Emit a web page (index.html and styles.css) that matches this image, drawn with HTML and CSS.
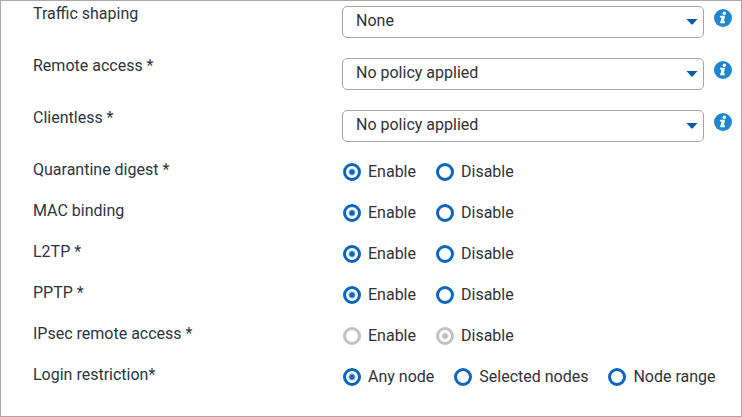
FILE: index.html
```html
<!DOCTYPE html>
<html lang="en">
<head>
<meta charset="utf-8">
<title>User policies</title>
<link rel="stylesheet" href="styles.css">
</head>
<body>
<svg class="sprite" aria-hidden="true">
  <symbol id="info" viewBox="0 0 18 18">
    <circle cx="9" cy="9" r="9" fill="#1c87cf"/>
    <circle cx="10.3" cy="4.2" r="1.7" fill="#fff"/>
    <path d="M6.2 6.8h4.9L9.8 12.5h1.3l-.4 1.8H6.1l1.3-5.7H5.9z" fill="#fff"/>
  </symbol>
  <symbol id="caret" viewBox="0 0 12 6">
    <path d="M.5 0h11L6.8 5.2q-.8.8-1.6 0z" fill="#0b5cab"/>
  </symbol>
</svg>
<form class="form">
  <div class="row row-select">
    <label class="name" for="traffic">Traffic shaping</label>
    <div class="select">
      <select id="traffic"><option>None</option></select>
      <svg class="caret"><use href="#caret"/></svg>
    </div>
    <button type="button" class="info" aria-label="Info"><svg><use href="#info"/></svg></button>
  </div>
  <div class="row row-select">
    <label class="name" for="remote">Remote access *</label>
    <div class="select">
      <select id="remote"><option>No policy applied</option></select>
      <svg class="caret"><use href="#caret"/></svg>
    </div>
    <button type="button" class="info" aria-label="Info"><svg><use href="#info"/></svg></button>
  </div>
  <div class="row row-select">
    <label class="name" for="clientless">Clientless *</label>
    <div class="select">
      <select id="clientless"><option>No policy applied</option></select>
      <svg class="caret"><use href="#caret"/></svg>
    </div>
    <button type="button" class="info" aria-label="Info"><svg><use href="#info"/></svg></button>
  </div>
  <div class="row" role="radiogroup" aria-labelledby="n1">
    <span class="name" id="n1">Quarantine digest *</span>
    <div class="options">
      <label><input type="radio" name="digest" checked>Enable</label>
      <label><input type="radio" name="digest">Disable</label>
    </div>
  </div>
  <div class="row" role="radiogroup" aria-labelledby="n2">
    <span class="name" id="n2">MAC binding</span>
    <div class="options">
      <label><input type="radio" name="mac" checked>Enable</label>
      <label><input type="radio" name="mac">Disable</label>
    </div>
  </div>
  <div class="row" role="radiogroup" aria-labelledby="n3">
    <span class="name" id="n3">L2TP *</span>
    <div class="options">
      <label><input type="radio" name="l2tp" checked>Enable</label>
      <label><input type="radio" name="l2tp">Disable</label>
    </div>
  </div>
  <div class="row" role="radiogroup" aria-labelledby="n4">
    <span class="name" id="n4">PPTP *</span>
    <div class="options">
      <label><input type="radio" name="pptp" checked>Enable</label>
      <label><input type="radio" name="pptp">Disable</label>
    </div>
  </div>
  <div class="row" role="radiogroup" aria-labelledby="n5">
    <span class="name" id="n5">IPsec remote access *</span>
    <div class="options">
      <label><input type="radio" name="ipsec" disabled>Enable</label>
      <label><input type="radio" name="ipsec" checked disabled>Disable</label>
    </div>
  </div>
  <div class="row" role="radiogroup" aria-labelledby="n6">
    <span class="name" id="n6">Login restriction*</span>
    <div class="options">
      <label><input type="radio" name="login" checked>Any node</label>
      <label><input type="radio" name="login">Selected nodes</label>
      <label><input type="radio" name="login">Node range</label>
    </div>
  </div>
</form>
</body>
</html>
```
FILE: styles.css
```css
* {
  box-sizing: border-box;
}

body {
  margin: 0;
  background: #fff;
  color: #2b3541;
  font: 16px/20px Roboto, "Liberation Sans", sans-serif;
}

.sprite {
  position: absolute;
  width: 0;
  height: 0;
}

.form {
  min-height: 100vh;
  padding: 3px 9px 8px 32px;
  border: 1px solid #a9a9a9;
}

.row {
  display: grid;
  grid-template-columns: 309px 1fr 18px;
  align-items: start;
  height: 41px;
}

.row-select {
  height: 52px;
}

.select {
  display: grid;
  align-items: center;
  margin: 2px 10px 0 0;
}

.select select {
  grid-area: 1 / 1;
  appearance: none;
  width: 100%;
  height: 32px;
  padding: 0 32px 3px 13px;
  border: 1px solid #a5a5a5;
  border-radius: 5px;
  background: #fff;
  color: #303236;
  font: inherit;
}

.caret {
  grid-area: 1 / 1;
  justify-self: end;
  width: 12px;
  height: 6px;
  margin-right: 6px;
  pointer-events: none;
}

.info {
  width: 18px;
  height: 18px;
  margin-top: 5px;
  padding: 0;
  border: 0;
  background: none;
}

.info svg {
  display: block;
  width: 18px;
  height: 18px;
}

.options {
  grid-column: 2 / -1;
  display: flex;
  gap: 20px;
  margin: 2px 0 0 1px;
  color: #303236;
}

.options label {
  display: flex;
  align-items: center;
  gap: 7px;
}

.options input {
  appearance: none;
  width: 18px;
  height: 18px;
  margin: 0;
  border: 3px solid #0b66bd;
  border-radius: 50%;
}

.options input:checked {
  background: radial-gradient(circle, #0b66bd 2px, transparent 4px);
}

.options input:disabled {
  border-color: #c2c2c2;
}

.options input:disabled:checked {
  background: radial-gradient(circle, #bdbdbd 2px, transparent 4px);
}
```
